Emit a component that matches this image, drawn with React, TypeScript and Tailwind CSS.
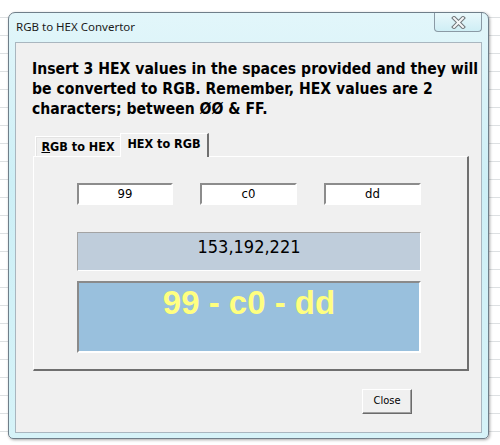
import React from 'react'

const ui = "font-['DejaVu_Sans_Condensed','DejaVu_Sans',sans-serif]"

export default function App() {
  return (
    <div className="h-[445px] w-[500px] overflow-hidden bg-white bg-[repeating-linear-gradient(to_bottom,transparent_0px,transparent_17px,#dde0e2_17px,#dde0e2_18px)] pl-[8px] pt-[12px]">
      <ConverterDialog />
    </div>
  )
}

function ConverterDialog() {
  return (
    <div className="flex h-[427px] w-[481px] flex-col rounded-t-[7px] rounded-b-[5px] border border-[#6f7e89] bg-[linear-gradient(to_bottom,#e2f6fa,#cdeff6_40%,#d6f3f8)] px-[6px] pb-[5px] shadow-[1px_1px_3px_rgba(0,0,0,0.35)]">
      <div className="flex h-[29px] items-start justify-between">
        <span className="ml-[1px] mt-[6px] font-['Noto_Sans',sans-serif] text-[11.5px] leading-[16px] text-[#1b1b1b]">
          RGB to HEX Convertor
        </span>
        <CloseGlyphButton />
      </div>
      <div className="flex-1 border border-[#a9b6bf] bg-[#f0f0f0] pl-[16px] pt-[16px]">
        <p className={`${ui} whitespace-nowrap text-[15.6px] font-bold leading-[20px] text-black`}>
          Insert 3 HEX values in the spaces provided and they will
          <br />
          be converted to RGB. Remember, HEX values are 2
          <br />
          characters; between ØØ &amp; FF.
        </p>
        <TabStrip />
        <HexPanel />
        <button
          type="button"
          className={`${ui} ml-[330px] mt-[18px] h-[25px] w-[50px] border border-t-white border-l-white border-r-[#6b6b6b] border-b-[#6b6b6b] bg-[#f0f0f0] text-[11px] text-black shadow-[inset_-1px_-1px_0_#a0a0a0]`}
        >
          Close
        </button>
      </div>
    </div>
  )
}

function CloseGlyphButton() {
  return (
    <div className="flex h-[19px] w-[48px] items-center justify-center rounded-b-[4px] border border-t-0 border-[#8a9aa5] bg-[linear-gradient(to_bottom,#e9f8fb,#cfeef5)]">
      <svg width="15" height="13" viewBox="0 0 15 13">
        <path d="M3 2 L12 11 M12 2 L3 11" stroke="#6f7478" strokeWidth="4" strokeLinecap="square" />
        <path d="M3 2 L12 11 M12 2 L3 11" stroke="#f4f6f7" strokeWidth="2" strokeLinecap="square" />
      </svg>
    </div>
  )
}

function TabStrip() {
  return (
    <div className={`${ui} ml-[3px] mt-[14px] flex items-end text-[12.5px] font-bold leading-[16px] text-black`}>
      <div className="flex h-[20px] w-[85px] items-center justify-center border-l border-t border-white bg-[#f0f0f0] shadow-[inset_1px_1px_0_#e3e3e3]">
        <span>
          <span className="underline">R</span>GB to HEX
        </span>
      </div>
      <div className="relative z-10 -mb-[1px] flex h-[24px] w-[89px] items-start justify-center border-l border-t border-r-2 border-l-white border-t-white border-r-[#6f6f6f] bg-[#f0f0f0] pt-[2px]">
        HEX to RGB
      </div>
    </div>
  )
}

function HexPanel() {
  return (
    <div className="ml-[1px] h-[215px] w-[436px] border-l border-t border-r-2 border-b-2 border-l-white border-t-white border-r-[#6f6f6f] border-b-[#6f6f6f] bg-[#f0f0f0] pl-[43px] pt-[26px]">
      <div className="flex gap-[27px]">
        <HexInput value="99" width="w-[96px]" />
        <HexInput value="c0" width="w-[97px]" />
        <HexInput value="dd" width="w-[97px]" />
      </div>
      <div className={`${ui} mt-[27px] flex h-[39px] w-[344px] justify-center border border-t-[#a3a3a3] border-l-[#a3a3a3] border-r-white border-b-white bg-[#bfcddb] pt-[3px] text-[18px] leading-[21px] text-black`}>
        153,192,221
      </div>
      <div className="mt-[10px] flex h-[72px] w-[344px] justify-center border-2 border-t-[#8a8a8a] border-l-[#8a8a8a] border-r-white border-b-white bg-[#99c0dd] pt-[2px] font-['Liberation_Sans',Arial,sans-serif] text-[33px] font-bold leading-[36px] text-[#ffff80]">
        99 - c0 - dd
      </div>
    </div>
  )
}

function HexInput({ value, width }: { value: string; width: string }) {
  return (
    <div
      className={`${ui} ${width} flex h-[22px] items-center justify-center border-2 border-t-[#8c8c8c] border-l-[#8c8c8c] border-r-white border-b-white bg-white text-[13px] text-black`}
    >
      {value}
    </div>
  )
}
